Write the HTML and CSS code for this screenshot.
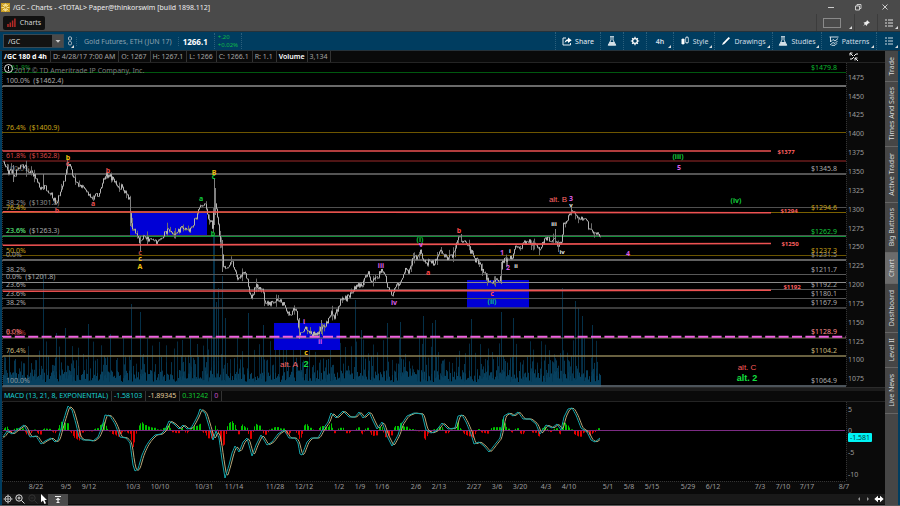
FILE: index.html
```html
<!DOCTYPE html>
<html lang="en">
<head>
<meta charset="utf-8">
<title>/GC - Charts</title>
<link rel="stylesheet" href="styles.css">
</head>
<body>
<header class="titlebar">
  <svg class="app-icon" viewBox="0 0 9 9"><rect width="9" height="9" fill="#c79a1c"/><path d="M4.500 .5V8.500M.5 4.500H8.500M1.500 1.500L7.500 7.500M7.500 1.500L1.500 7.500M3 .8L6 8.200M6 .8L3 8.200" stroke="#fff0b0" stroke-width=".8"/><circle cx="4.500" cy="4.500" r="1.200" fill="#c79a1c"/></svg>
  <h1 class="title">/GC - Charts - &lt;TOTAL&gt; Paper@thinkorswim [build 1898.112]</h1>
  <div class="window-buttons">
    <button aria-label="Minimize"><svg viewBox="0 0 8 8"><path d="M1 4.500H7" stroke="#ccc" fill="none"/></svg></button>
    <button aria-label="Restore"><svg viewBox="0 0 8 8"><path d="M1.500 3H5.500V7H1.500ZM3 3V1.500H7V5.500H5.500" stroke="#ccc" fill="none"/></svg></button>
    <button aria-label="Close"><svg viewBox="0 0 8 8"><path d="M1.500 1.500L6.500 6.500M6.500 1.500L1.500 6.500" stroke="#ccc" fill="none"/></svg></button>
  </div>
</header>
<nav class="tabbar">
  <button class="tab"><svg class="tab-icon" viewBox="0 0 9 9"><path d="M1 9V6M3.300 9V4.500M5.600 9V2.500M7.900 9V.5" stroke="#b82a26" stroke-width="1.500"/></svg>Charts</button>
  <div class="tabbar-tools">
    <button class="tool-grid menu" aria-label="Layout"><span class="frame"></span></button>
    <button class="tool-pin" aria-label="Pin"><svg class="icon" viewBox="0 0 10 10"><path d="M6 2L9 5L7.500 5.200L6 6.800L5.800 8L4.200 6.500L2 8.300L3.700 6L2.500 4.500L4 4.300L5.700 3.200Z" fill="#eee"/></svg></button>
    <button class="tool-list menu" aria-label="Tab menu"><svg class="icon" viewBox="0 0 10 10"><path d="M1 2H3M1 5H3M1 8H3M4 2H9M4 5H9M4 8H9" stroke="#ddd" stroke-width="1.100"/></svg></button>
  </div>
</nav>
<div class="toolbar">
  <div class="symbol">
    <input class="symbol-input" type="text" value="/GC" aria-label="Symbol">
    <button class="symbol-drop" aria-label="Choose symbol"><svg viewBox="0 0 8 8"><path d="M1.500 3H6.500L4 5.700Z" fill="#ccc"/></svg></button>
  </div>
  <button class="link menu" aria-label="Link"><svg viewBox="0 0 6 10"><rect x="1.500" y=".8" width="3" height="3.400" rx="1.200" fill="none" stroke="#a9b9c4"/><rect x="1.500" y="5.500" width="3" height="3.400" rx="1.200" fill="none" stroke="#a9b9c4"/></svg></button>
  <span class="instrument">Gold Futures, ETH (JUN 17)</span>
  <span class="last">1266.1</span>
  <span class="change"><span>+.20</span><span>+0.02%</span></span>
  <div class="actions">
    <button class="act share"><svg class="icon" viewBox="0 0 10 10"><path d="M4 2H1V9H8.500V7" fill="none" stroke="#e4edf2"/><path d="M2.700 7C3 4.300 4.500 3.200 6 3.200V1.500L9.700 4.200L6 7V5.300C4.500 5.300 3.500 5.800 2.700 7Z" fill="#fff"/></svg>Share</button>
    <button class="act small" aria-label="Flask"><svg class="icon" viewBox="0 0 10 10"><path d="M3 .7H7M4 .7V4L1.200 9.200H8.800L6 4V.7" fill="none" stroke="#d5e1e8"/><path d="M3 6H7L8.800 9.200H1.200Z" fill="#d5e1e8"/></svg></button>
    <button class="act small" aria-label="Settings"><svg class="icon" viewBox="0 0 10 10"><circle cx="5" cy="5" r="2.400" fill="none" stroke="#fff" stroke-width="1.300"/><path d="M5 .8V2.400M5 7.600V9.200M.8 5H2.400M7.600 5H9.200M2.100 2.100L3.200 3.200M6.800 6.800L7.900 7.900M7.900 2.100L6.800 3.200M3.200 6.800L2.100 7.900" stroke="#fff" stroke-width="1.200"/></svg></button>
    <button class="act period menu">4h</button>
    <button class="act style menu"><svg class="icon" viewBox="0 0 10 10"><path d="M3 2V9M7 0V8" stroke="#d5e1e8" stroke-width=".8"/><rect x="1.500" y="3" width="3" height="5" fill="#fff"/><rect x="5.700" y="1.700" width="2.600" height="4.800" fill="#003d60" stroke="#d5e1e8" stroke-width=".8"/></svg>Style</button>
    <button class="act drawings menu"><svg class="icon" viewBox="0 0 10 10"><path d="M1 9L2 6.700L7.700 1L9 2.300L3.300 8Z" fill="#fff"/></svg>Drawings</button>
    <button class="act studies menu"><svg class="icon" viewBox="0 0 10 10"><path d="M3 .7H7M4 .7V4L1.200 9.200H8.800L6 4V.7" fill="none" stroke="#d5e1e8"/><path d="M3 6H7L8.800 9.200H1.200Z" fill="#d5e1e8"/></svg>Studies</button>
    <button class="act patterns menu"><svg class="icon" viewBox="0 0 10 10"><path d="M.5 1H9.500M1.500 1V6L4 3.500L6 5L9 2.500M1 9L4 6.500L6 7.500L8.500 5M2.500 9.300H6L8 7.300" fill="none" stroke="#e0e8ee" stroke-width=".9"/></svg>Patterns</button>
    <button class="act last-menu menu" aria-label="Chart menu"><svg class="icon" viewBox="0 0 10 10"><path d="M1 2H3M1 5H3M1 8H3M4 2H9M4 5H9M4 8H9" stroke="#ccd9e0" stroke-width="1.100"/></svg></button>
  </div>
</div>
<main class="workspace">
  <section class="charts">
    <div class="strip">
      <b class="cell white">/GC 180 d 4h</b><span class="cell">D: 4/28/17 7:00 AM</span><span class="cell">O: 1267</span><span class="cell">H: 1267.1</span><span class="cell">L: 1266</span><span class="cell">C: 1266.1</span><span class="cell">R: 1.1</span><span class="cell white vol">Volume</span><span class="cell">3,134</span>
      <button class="collapse" aria-label="Toggle axis"><svg class="icon" viewBox="0 0 10 10"><path d="M1 1L4 4M1 3.500V1H3.500M1 7H3L5 5M9 2H7L5 4M6 6L9 9M6 8.500V6H8.500" fill="none" stroke="#eee"/></svg></button>
    </div>
    <svg id="price" class="plot" viewBox="2 63 883 324" role="img" aria-label="Price chart"></svg>
    <div class="splitter"></div>
    <div class="strip study">
      <span class="cell cyan">MACD (13, 21, 8, EXPONENTIAL)</span><span class="cell cyan">-1.58103</span><span class="cell tan">-1.89345</span><span class="cell green">0.31242</span><span class="cell violet">0</span>
    </div>
    <svg id="macd" class="plot" viewBox="2 402 883 92" role="img" aria-label="MACD study"></svg>
    <div class="bottombar">
      <button class="cross" aria-label="Crosshair"><svg class="icon" viewBox="0 0 10 10"><circle cx="5" cy="5" r="3" fill="none" stroke="#ccc" stroke-width=".9"/><path d="M5 .5V9.500M.5 5H9.500" stroke="#ccc" stroke-width=".9"/></svg></button>
      <button aria-label="Zoom in"><svg class="icon" viewBox="0 0 10 10"><circle cx="4" cy="4" r="3.200" fill="none" stroke="#ddd"/><path d="M6.300 6.300L9.500 9.500M2.500 4H5.500M4 2.500V5.500" stroke="#ddd"/></svg></button>
      <button aria-label="Zoom out" disabled><svg class="icon" viewBox="0 0 10 10"><circle cx="4" cy="4" r="3.200" fill="none" stroke="#333"/><path d="M6.300 6.300L9.500 9.500M2.500 4H5.500" stroke="#333"/></svg></button>
      <button class="pointer" aria-label="Pointer"><svg class="icon" viewBox="0 0 10 10"><path d="M2 0V8.300L4 6.600L5.500 10L7 9.300L5.500 6H8Z" fill="#fff"/></svg></button>
      <button class="raise" aria-label="Expand panel"><svg class="icon" viewBox="0 0 10 10"><path d="M2 2.500H8M3.500 8.500H6.500" stroke="#eee"/><path d="M5 3.500L7.500 6H5.600V8H4.400V6H2.500Z" fill="#eee"/></svg></button>
      <div class="scroll">
        <button aria-label="Scroll left"><svg class="icon" viewBox="0 0 10 10"><path d="M6 3L4 5L6 7Z" fill="#999"/></svg></button>
        <button aria-label="Scroll right"><svg class="icon" viewBox="0 0 10 10"><path d="M4 3L6 5L4 7Z" fill="#999"/></svg></button>
        <button aria-label="Fit width"><svg class="icon" viewBox="0 0 10 10"><path d="M.3 5L4 1.800V4H6V1.800L9.700 5L6 8.200V6H4V8.200Z" fill="#fff"/></svg></button>
      </div>
    </div>
  </section>
  <nav class="sidetabs">
    <button class="side s1"><span>Trade</span></button>
    <button class="side s2"><span>Times And Sales</span></button>
    <button class="side s3"><span>Active Trader</span></button>
    <button class="side s4"><span>Big Buttons</span></button>
    <button class="side s5 active"><span>Chart</span></button>
    <button class="side s6"><span>Dashboard</span></button>
    <button class="side s7"><span>Level II</span></button>
    <button class="side s8"><span>Live News</span></button>
  </nav>
</main>
<script src="chart.js"></script>
</body>
</html>
```
FILE: styles.css
```css
* { box-sizing: border-box; }
body {
  margin: 0;
  min-height: 100vh;
  display: flex;
  flex-direction: column;
  background: #4a4a4a;
  color: #d4d4d4;
  font: 7px/9px "Noto Sans", "Open Sans", sans-serif;
  overflow: hidden;
}
button {
  margin: 0;
  padding: 0;
  border: 0;
  background: none;
  color: inherit;
  font: inherit;
  display: flex;
  align-items: center;
  justify-content: center;
}
svg { display: block; flex: none; }
.icon { width: 10px; height: 10px; }
.menu { position: relative; }
.menu::after {
  content: "";
  position: absolute;
  right: 2px;
  bottom: 2px;
  width: 3px;
  height: 3px;
  background: #ddd;
  clip-path: polygon(100% 0, 100% 100%, 0 100%);
}

.titlebar { height: 14px; display: flex; align-items: center; padding-left: 1px; }
.app-icon { width: 9px; height: 9px; }
.title { margin: 0 0 0 3px; font-size: 7px; font-weight: 400; color: #eee; white-space: nowrap; }
.window-buttons { display: flex; margin-left: auto; padding-right: 2px; }
.window-buttons button { width: 27px; height: 13px; }
.window-buttons svg { width: 8px; height: 8px; }

.tabbar { height: 17px; display: flex; align-items: center; padding-left: 3px; }
.tab { width: 42px; height: 14px; gap: 4px; border-radius: 2px; background: #111; }
.tab-icon { width: 9px; height: 9px; }
.tabbar-tools { display: flex; margin-left: auto; height: 17px; }
.tabbar-tools button { border-left: 1px solid #3c3c3c; }
.tool-grid { width: 38px; padding-right: 7px; }
.tool-pin { width: 23px; }
.tool-list { width: 23px; }
.frame { width: 18px; height: 10px; border: 1px solid #8a8a8a; }

.toolbar {
  height: 20px;
  display: flex;
  align-items: center;
  padding-left: 3px;
  background: #003d60;
  border-top: 1px solid #26323a;
  border-bottom: 1px solid #26323a;
  white-space: nowrap;
}
.symbol { display: flex; width: 61px; height: 14px; border: 1px solid #3a4a54; background: #131313; }
.symbol-input { flex: 1; min-width: 0; padding: 0 4px; border: 0; background: none; color: #ddd; font: inherit; }
.symbol-drop { width: 11px; background: #4a4a4a; }
.symbol-drop svg { width: 8px; height: 8px; }
.link { width: 12px; height: 18px; }
.link svg { width: 6px; height: 10px; }
.instrument { padding: 0 6px 0 7px; border-left: 1px dotted #2b5f7c; color: #8ba1af; }
.last { padding: 0 6px 0 4px; border-left: 1px dotted #2b5f7c; color: #fff; font-size: 8px; font-weight: 700; }
.change { display: flex; flex-direction: column; padding: 0 3px; border: 0 dotted #2b5f7c; border-width: 0 1px; font-size: 6px; line-height: 8px; color: #10b848; }
.actions { display: flex; margin-left: auto; height: 18px; }
.act { border-left: 1px dotted #2b5f7c; gap: 3px; color: #d0dee6; }
.share { width: 45px; color: #e4eef4; }
.small { width: 23px; }
.period { width: 27px; font-weight: 600; }
.style { width: 41px; }
.drawings { width: 58px; }
.studies { width: 49px; }
.patterns { width: 55px; }
.last-menu { width: 24px; }

.workspace { flex: 1; display: flex; padding: 0 2px; border-bottom: 1px solid #5a5a5a; background: #003d60; align-items: stretch; }
.charts { flex: 1; min-width: 0; background: #0a0a0a; }
.strip { display: flex; align-items: stretch; height: 12px; line-height: 11px; border-bottom: 1px solid #242424; color: #a4a4a4; white-space: nowrap; }
.cell { padding: 0 3px 0 2px; border-right: 1px solid #333; }
.white { color: #fff; }
.vol { font-weight: 600; padding: 0 2px; }
.study { height: 11px; line-height: 10px; }
.cyan { color: #18d0d4; }
.tan { color: #e0cc9c; }
.green { color: #10c830; }
.violet { color: #c050c8; }
.collapse { margin-left: auto; width: 62px; }
.plot { width: 100%; height: auto; }
.splitter { height: 4px; background: #1c1c1c; border-top: 1px solid #2c2c2c; }

.bottombar { display: flex; align-items: center; height: 10px; background: #191919; }
.bottombar button { width: 13px; }
.bottombar .cross { width: 11px; }
.bottombar .pointer { width: 9px; }
.bottombar .raise { width: 20px; height: 11px; background: #4a4a4a; }
.bottombar .icon { height: 10px; }
.scroll { display: flex; margin-left: auto; }
.scroll button { width: 9px; }
.scroll button:last-child { width: 13px; }

.sidetabs { width: 13px; display: flex; flex-direction: column; background: #464646; color: #d8d8d8; }
.side { width: 13px; border-bottom: 1px solid #666; }
.side span { writing-mode: vertical-rl; transform: rotate(180deg); line-height: 11px; white-space: nowrap; }
.s1 { height: 31px; }
.s2 { height: 65px; }
.s3 { height: 56px; }
.s4 { height: 50px; }
.s5 { height: 31px; }
.s6 { height: 49px; }
.s7 { height: 35px; }
.s8 { height: 46px; }
.active { background: #6c6c6c; }

svg text { font-size: 7px; white-space: pre; }
svg .wave { font-weight: 700; }
svg .tiny { font-size: 6px; font-weight: 700; }
svg .arial { font-family: "Liberation Sans", Arial, sans-serif; font-size: 8px; }
svg .arial-big { font-family: "Liberation Sans", Arial, sans-serif; font-size: 9px; font-weight: 700; }
```
FILE: chart.js
```js
const NS = 'http://www.w3.org/2000/svg';
const RIGHT = 846;
const GRAY = '#aaa', GOLD = '#c8a218', RED = '#e85050', GREEN = '#12c83c', MAG = '#d85ce8', WHITE = '#eee', TAN = '#c8b87c';
const YELLOW = '#f0c010', BRIGHT = '#ff4848';

function add(parent, name, attrs, text) {
  const el = document.createElementNS(NS, name);
  for (const key in attrs) el.setAttribute(key, attrs[key]);
  if (text !== undefined) el.textContent = text;
  parent.appendChild(el);
  return el;
}
function label(parent, text, x, cy, fill, anchor, cls) {
  const rise = cls === 'tiny' ? 2 : 3;
  add(parent, 'text', { x, y: cy + rise, fill, 'text-anchor': anchor || 'start', class: cls || '' }, text);
}
let seed = 7;
function rnd() {
  seed = (seed * 1103515245 + 12345) % 2147483648;
  return seed / 2147483648;
}
function interpolate(points, x) {
  for (let i = 1; i < points.length; i++) {
    if (x <= points[i][0]) {
      const [x0, y0] = points[i - 1], [x1, y1] = points[i];
      return y0 + (y1 - y0) * Math.max(0, x - x0) / (x1 - x0);
    }
  }
  return points[points.length - 1][1];
}
function pairs(text) {
  return text.trim().split(/\s+/).map(p => p.split(',').map(Number));
}

const price = document.getElementById('price');
add(price, 'rect', { x: 2, y: 63, width: RIGHT - 2, height: 324, fill: '#000' });

// Volume
let base = '', vol = '';
for (let x = 3.5; x < 601; x += 1) {
  base += `M${x} 387V${(382 - rnd() * 12).toFixed(1)}`;
  if (rnd() > .6) vol += `M${x} 387V${(374 - rnd() * 18).toFixed(1)}`;
}
let haze = '';
for (let x = 4; x < 600; x += 3 + Math.floor(rnd() * 5)) haze += `M${x + .5} 387V${(366 - rnd() * 30).toFixed(1)}`;
let tall = '';
for (const [x, y] of pairs('43,275 56,333 65,328 88,324 110,334 131,304 140,312 190,336 207,338 213,236 214,236 216,302 218,288 222,276 225,318 248,313 263,325 355,300 361,330 387,323 400,322 423,316 432,323 435,320 471,319 501,312 513,318 562,288 575,301 578,308 582,316 592,325')) {
  tall += `M${x + .5} 387V${y}`;
}
add(price, 'path', { d: haze, stroke: '#042a40', 'stroke-width': 1, fill: 'none' });
add(price, 'path', { d: tall, stroke: '#053048', 'stroke-width': 1, fill: 'none' });
add(price, 'path', { d: vol, stroke: '#053650', 'stroke-width': 1, fill: 'none' });
add(price, 'path', { d: base, stroke: '#07405e', 'stroke-width': 1, fill: 'none' });

// Target zones
for (const [x, y, w, h] of [[130, 212, 77, 24], [274, 323, 66, 27], [467, 280, 62, 28]]) {
  add(price, 'rect', { x, y, width: w, height: h, fill: '#0000d6' });
}

// Retracement levels: y at left, y at right, right end, colour, width
const levels = [
  [72.5, 72.5, RIGHT, '#00580f', 1], [86, 86, RIGHT, '#6a6a6a', 2], [132.5, 132.5, RIGHT, '#6e5600', 1],
  [161, 161, RIGHT, '#6a1d1d', 1.5], [174, 174, RIGHT, '#707070', 1.5], [207.5, 207.5, RIGHT, '#505050', 1],
  [212.5, 212.5, RIGHT, '#7a6000', 1], [235.5, 235.5, RIGHT, '#505050', 1], [236.5, 236.5, RIGHT, '#12903a', 1],
  [255.5, 255.5, RIGHT, '#6a5400', 1], [260, 260, RIGHT, '#808080', 1.5], [274.5, 274.5, RIGHT, '#585858', 1],
  [282.5, 282.5, RIGHT, '#8a8a8a', 1], [289.5, 289.5, RIGHT, '#555', 1], [298.5, 298.5, RIGHT, '#555', 1],
  [308, 308, RIGHT, '#505050', 1.5], [338, 338, RIGHT, '#80705c', 1], [356, 356, RIGHT, '#8c8256', 1.5],
  [386, 386, RIGHT, '#66707a', 1.5]
];
for (const [a, b, end, stroke, width] of levels) {
  add(price, 'line', { x1: 2, y1: a, x2: end, y2: b, stroke, 'stroke-width': width });
}

// Left and right captions
label(price, '61.8%', 11, 67, '#0b8a24');
label(price, '2017 © TD Ameritrade IP Company, Inc.', 14, 70, '#7c7c7c');
for (const [text, y, color] of [
  ['100.0%  ($1462.4)', 80, GRAY], ['76.4%  ($1400.9)', 127, GOLD], ['61.8%  ($1362.8)', 155, '#d84444'],
  ['100.0%', 168, '#777'], ['38.2%  ($1301.8)', 202, '#909090'], ['76.4%', 207, GOLD],
  ['23.6%  ($1263.3)', 230, GRAY], ['23.6%', 230, GREEN], ['50.0%', 250, GOLD], ['0.0%', 254, '#909090'],
  ['38.2%', 269, GRAY], ['0.0%  ($1201.8)', 276, GRAY], ['23.6%', 284, GRAY], ['23.6%', 293, GRAY],
  ['38.2%', 302, GRAY], ['61.8%', 332, '#a83c3c'], ['0.0%', 331, '#ff8080'], ['76.4%', 350, TAN], ['100.0%', 380, '#8c969c']
]) label(price, text, 6, y, color);
for (const [text, y, color] of [
  ['$1479.8', 67, '#0cb82e'], ['$1345.8', 168, GRAY], ['$1294.6', 207, GOLD], ['$1262.9', 231, GREEN],
  ['$1231.5', 254, '#909090'], ['$1237.3', 250, GOLD], ['$1211.7', 269, GRAY], ['$1192.2', 284, GRAY],
  ['$1180.1', 293, GRAY], ['$1167.9', 302, GRAY], ['$1128.9', 331, '#ff9090'], ['$1104.2', 350, TAN], ['$1064.9', 380, GRAY]
]) label(price, text, 837, y, color, 'end');

// Candles
const path = pairs(`3,162 6,167 8,173 12,170 15,176 18,168 22,165 25,167 28,171 32,172 37,178 40,188 44,187 48,191
52,196 55,202 57,202 60,192 64,182 66,170 69,166 72,173 76,182 80,186 85,190 89,196 92,198 95,195 99,195 102,182
105,176 110,176 113,180 117,186 122,187 126,193 130,201 131,225 134,228 137,233 139,243 143,237 148,240 152,240
157,243 162,238 166,232 170,230 176,235 181,228 187,232 190,230 194,222 198,214 201,204 205,205 208,215 211,222
213,228 214,200 216,208 218,222 220,240 222,245 223,270 228,265 233,264 236,272 238,279 243,273 247,276 249,292
252,297 256,285 259,290 262,288 265,300 270,305 275,302 280,300 285,306 289,315 294,310 297,312 299,333 302,334
306,328 308,330 312,334 317,336 320,330 324,325 328,322 330,312 334,318 338,308 342,298 346,299 350,295 354,290
358,283 361,287 364,280 368,271 372,283 377,278 381,271 385,277 389,290 392,294 397,285 402,280 406,267 409,272
413,259 417,257 421,250 423,260 426,265 430,260 434,265 438,254 442,252 446,258 450,257 454,254 457,241 461,238
466,244 470,250 474,258 480,265 485,275 490,285 494,280 500,282 502,263 506,260 512,258 515,248 518,249 522,247
527,240 532,243 538,250 543,243 547,238 551,242 555,240 559,245 562,240 563,227 567,219 571,212 575,213 578,220
584,219 587,220 588,229 592,229 595,236 598,232 600,235`);
let wicks = '', bodies = '';
let prev = 162;
for (let x = 3.5; x < 601; x += 1) {
  const c = interpolate(path, x) + (rnd() - .5) * 6;
  const lo = Math.max(c, prev), hi = Math.min(c, prev);
  const extra = rnd() > .8 ? 6 : 1;
  wicks += `M${x} ${(hi - rnd() * extra).toFixed(1)}V${(lo + rnd() * extra).toFixed(1)}`;
  bodies += `M${x} ${hi.toFixed(1)}V${(lo - .4).toFixed(1)}`;
  prev = c;
}
add(price, 'path', { d: wicks, stroke: '#6c6c6c', 'stroke-width': 1, fill: 'none' });
add(price, 'path', { d: bodies, stroke: '#b4b4b4', 'stroke-width': 1, fill: 'none' });
add(price, 'path', { d: 'M43.500 174V190M130.500 198V226M140.500 236V251M214.500 178V225M215.500 188V215M222.500 240V272M299.500 318V339M321.500 320V334M461.500 234V242M555.500 229V243M571.500 207V215M13.500 165V182M501.500 262V284', stroke: '#808080', fill: 'none' });

// Support and resistance lines
for (const [y1, y2] of [[151, 151], [211.7, 212.7], [245.2, 243.5], [291.3, 290.3]]) {
  add(price, 'line', { x1: 2, y1, x2: 771, y2, stroke: '#ee5252', 'stroke-width': 1.6 });
}
add(price, 'line', { x1: 1.4, y1: 336.700, x2: RIGHT, y2: 336.700, stroke: '#f062e0', 'stroke-width': 2, 'stroke-dasharray': '10 3.400' });

// Wave counts
const waves = [
  ['b', 68, 157, YELLOW], ['c', 67.5, 163, RED], ['b', 108, 170, RED], ['b', 57, 210, RED], ['a', 93, 203, RED],
  ['B', 214, 172, YELLOW], ['c', 213.5, 176, GREEN], ['a', 201, 198, GREEN], ['b', 213, 233, GREEN],
  ['c', 140, 252, '#b8443c'], ['c', 140, 258, YELLOW], ['A', 140, 266, YELLOW], ['(i)', 420, 239, GREEN],
  ['v', 421, 244, MAG], ['b', 459, 230, BRIGHT], ['a', 428, 272, BRIGHT], ['iii', 381, 265, MAG], ['iv', 394, 302, MAG],
  ['i', 304, 321, MAG], ['ii', 320, 341, MAG], ['c', 306, 352, YELLOW], ['1', 502, 252, MAG], ['2', 508, 267, MAG],
  ['3', 571, 198, MAG], ['c', 492, 293, BRIGHT], ['(ii)', 492, 301, '#10b880'], ['(iii)', 678, 156, GREEN], ['5', 679, 167, MAG],
  ['(iv)', 736, 200, GREEN], ['4', 628, 253, MAG]
];
for (const [text, x, y, color] of waves) label(price, text, x, y, color, 'middle', 'wave');
for (const [text, x, y] of [['i', 510, 251], ['ii', 516, 266], ['iii', 554, 224], ['iv', 562, 252], ['v', 571, 205]]) {
  label(price, text, x, y, WHITE, 'middle', 'tiny');
}
for (const [text, x, y] of [['$1377', 786, 152], ['$1294', 789, 211], ['$1250', 790, 244], ['$1192', 792, 287]]) {
  label(price, text, x, y, '#ff6060', 'middle', 'tiny');
}
label(price, 'alt. B', 558, 199, '#ff6868', 'middle', 'arial');
label(price, 'alt. A', 289, 364, '#ff6868', 'middle', 'arial');
label(price, 'alt. C', 747, 367, '#ff5c5c', 'middle', 'arial');
label(price, '2', 306, 364, '#14e040', 'middle', 'arial-big');
label(price, 'alt. 2', 747, 378, '#14e040', 'middle', 'arial-big');

add(price, 'circle', { cx: 8.500, cy: 68.500, r: 4, fill: 'none', stroke: '#ddd' });
add(price, 'path', { d: 'M8.500 66V69.300M8.500 70V71.200', stroke: '#ddd', fill: 'none' });

// Price axis
add(price, 'path', { d: 'M846.500 63V387M2.500 63V387', stroke: '#333', 'stroke-dasharray': '1 1', fill: 'none' });
for (let i = 0; i <= 16; i++) label(price, String(1475 - 25 * i), 848, Math.round(76.800 + 18.84 * i), '#9c9c9c');

// MACD
const macd = document.getElementById('macd');
add(macd, 'rect', { x: 2, y: 402, width: RIGHT - 2, height: 79, fill: '#000' });
const fast = pairs(`3,437 7,431 12,434 17,430 24,425 30,437 36,436 41,444 45,441 51,438 55,442 58,440 62,425 66,412
68,406 72,410 76,424 79,437 83,440 88,440 93,441 98,437 102,427 105,415 110,416 115,424 120,437 126,438 130,443
133,465 135,471 138,469 142,455 146,446 150,440 155,435 161,434 165,430 169,421 174,424 179,429 183,425 187,429
191,428 195,421 198,415 200,409 205,413 208,423 213,440 216,431 219,438 222,460 225,478 229,465 232,453 235,446
239,452 243,442 247,438 252,456 256,445 261,435 267,445 272,442 278,434 284,430 289,438 295,438 298,443 300,454
302,455 307,442 311,438 318,438 323,429 328,422 331,413 336,418 343,411 349,417 355,417 359,412 363,418 369,412
373,421 377,429 382,422 387,436 392,446 398,435 401,425 407,416 414,413 422,414 426,430 431,433 436,431 442,423
448,429 455,428 458,416 462,415 466,422 471,434 474,444 479,442 484,446 489,452 493,447 500,438 504,416 509,413
513,416 518,412 523,419 530,419 536,424 540,434 546,425 552,428 557,424 561,430 564,417 568,409 572,408 576,415
581,428 587,432 591,440 595,442 600,438`);
const slowAt = x => [1, 2, 3].reduce((sum, k) => sum + interpolate(fast, x - k), 0) / 3;
let fastLine = '', slowLine = '', up = '', down = '';
for (let x = 3; x <= 600; x += 1) {
  const f = interpolate(fast, x), s = slowAt(x), d = (s - f) * 1.1;
  fastLine += `${x},${f.toFixed(1)} `;
  slowLine += `${x},${s.toFixed(1)} `;
  if (x % 3 === 0) continue;
  if (d > 0) up += `M${x + .5} 430.500V${(430 - d).toFixed(1)}`;
  else down += `M${x + .5} 430.500V${(431 - d).toFixed(1)}`;
}
add(macd, 'path', { d: up, stroke: '#00c400', fill: 'none' });
add(macd, 'path', { d: down, stroke: '#e00000', fill: 'none' });
add(macd, 'line', { x1: 2, y1: 430.500, x2: 845, y2: 430.500, stroke: '#7c2c84' });
add(macd, 'polyline', { points: slowLine, stroke: '#bba878', fill: 'none' });
add(macd, 'polyline', { points: fastLine, stroke: '#14a6ac', fill: 'none' });
add(macd, 'path', { d: 'M846.500 402V481M2.500 402V481M2 481.500H846', stroke: '#333', 'stroke-dasharray': '1 1', fill: 'none' });
for (const [text, y] of [['5', 409], ['0', 430], ['-5', 452], ['-10', 474]]) label(macd, text, 848, y, '#9c9c9c');
add(macd, 'rect', { x: 848, y: 433, width: 24, height: 9, rx: 1, fill: '#00f4f4' });
label(macd, '-1.581', 860, 437, '#003c3c', 'middle');

for (const [text, x] of [['8/22', 36], ['9/5', 66], ['9/12', 89], ['10/3', 133], ['10/10', 160], ['10/31', 204],
  ['11/14', 234], ['11/28', 275], ['12/12', 304], ['1/2', 339], ['1/9', 360], ['1/16', 382], ['2/6', 416], ['2/13', 439],
  ['2/27', 474], ['3/6', 497], ['3/20', 520], ['4/3', 546], ['4/10', 569], ['5/1', 608], ['5/8', 629], ['5/15', 652],
  ['5/29', 688], ['6/12', 713], ['7/3', 760], ['7/10', 783], ['7/17', 807], ['8/7', 844]]) {
  label(macd, text, x, 486, '#9c9c9c', 'middle');
}
```
